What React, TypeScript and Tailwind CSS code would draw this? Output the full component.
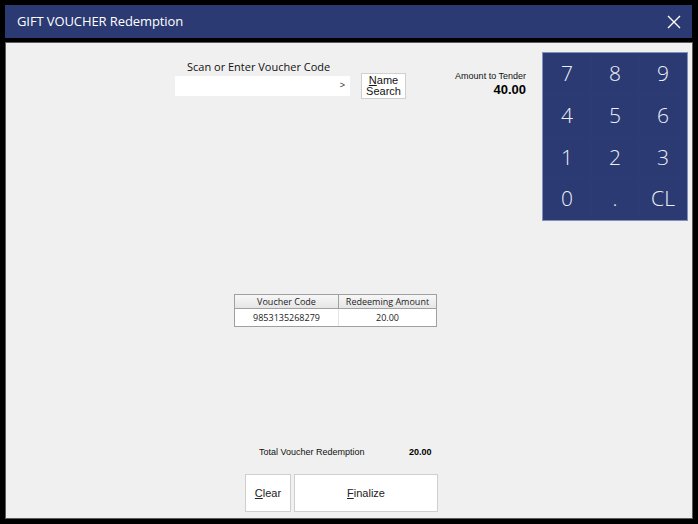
import React from "react"

const keys = ["7", "8", "9", "4", "5", "6", "1", "2", "3", "0", ".", "CL"]

function Underlined({ text }: { text: string }) {
  return (
    <>
      <span className="underline underline-offset-[1px]">{text[0]}</span>
      {text.slice(1)}
    </>
  )
}

export default function App() {
  return (
    <div className="w-[698px] h-[524px] bg-black flex flex-col px-[5px] pt-[5px] pb-[5px] font-['Open_Sans',sans-serif]">
      {/* Title bar */}
      <div className="h-[33px] mr-[1px] bg-[#2b3a72] flex items-center justify-between pl-[12px] pr-[10px] shrink-0">
        <span className="text-white text-[13px] tracking-[-0.1px]">GIFT VOUCHER Redemption</span>
        <svg width="14" height="14" viewBox="0 0 14 14" className="mr-[1px]">
          <path d="M1 1 L13 13 M13 1 L1 13" stroke="#ffffff" strokeWidth="1.4" />
        </svg>
      </div>

      {/* Body */}
      <div className="mt-[4px] flex-1 bg-[#f0f0f0] border border-[#5c5c5c] flex flex-col">
        {/* Top row */}
        <div className="flex items-start h-[178px]">
          <div className="ml-[169px] mt-[17px] flex flex-col">
            <span className="ml-[12px] text-[11px] text-[#111] leading-[14px]">Scan or Enter Voucher Code</span>
            <div className="mt-[2px] w-[175px] h-[20px] bg-white flex items-center justify-end pr-[5px]">
              <span className="text-[9px] text-[#333] font-['Liberation_Sans',sans-serif]">&gt;</span>
            </div>
          </div>
          <button className="ml-[11px] mt-[30px] w-[45px] h-[26px] bg-white border border-[#cfcfcf] flex flex-col items-center justify-center text-[11px] leading-[11px] text-[#111] font-['Liberation_Sans',sans-serif]">
            <span>
              <Underlined text="Name" />
            </span>
            <span>Search</span>
          </button>
          <div className="ml-[45px] mt-[28px] w-[75px] flex flex-col items-end font-['Liberation_Sans',sans-serif]">
            <span className="text-[9px] leading-[11px] text-[#111]">Amount to Tender</span>
            <span className="text-[13px] leading-[16px] font-bold text-black">40.00</span>
          </div>
          <div className="ml-[16px] mt-[9px] w-[146px] h-[169px] bg-[#2b3a72] border border-[#8290b8] grid grid-cols-3 grid-rows-4">
            {keys.map((k) => (
              <div
                key={k}
                className="flex items-center justify-center text-[#eef0f8] text-[21px] font-light border border-[#2c3b74]"
              >
                {k}
              </div>
            ))}
          </div>
        </div>

        {/* Voucher table */}
        <div className="ml-[228px] mt-[73px] w-[203px] border border-[#a0a0a0] bg-white text-[9px] text-[#222] font-['Open_Sans',sans-serif]">
          <div className="flex h-[14px] bg-gradient-to-b from-[#f7f7f7] to-[#e6e6e6] border-b border-[#a0a0a0]">
            <div className="w-[104px] flex items-center justify-center border-r border-[#a0a0a0]">Voucher Code</div>
            <div className="flex-1 flex items-center justify-center">Redeeming Amount</div>
          </div>
          <div className="flex h-[17px]">
            <div className="w-[104px] flex items-center justify-center border-r border-[#e4e4e4]">9853135268279</div>
            <div className="flex-1 flex items-center justify-center">20.00</div>
          </div>
        </div>

        <div className="flex-1" />

        {/* Totals */}
        <div className="flex items-center ml-[253px] h-[12px] text-[9px] font-['Liberation_Sans',sans-serif] text-[#111]">
          <span className="w-[150px]">Total Voucher Redemption</span>
          <span className="font-bold text-black">20.00</span>
        </div>

        {/* Buttons */}
        <div className="flex ml-[239px] mt-[15px] mb-[6px] gap-[3px] text-[11px] text-[#222] font-['Liberation_Sans',sans-serif]">
          <button className="w-[46px] h-[38px] bg-white border border-[#cfcfcf] flex items-center justify-center">
            <span>
              <Underlined text="Clear" />
            </span>
          </button>
          <button className="w-[144px] h-[38px] bg-white border border-[#cfcfcf] flex items-center justify-center">
            <span>
              <Underlined text="Finalize" />
            </span>
          </button>
        </div>
      </div>
    </div>
  )
}
